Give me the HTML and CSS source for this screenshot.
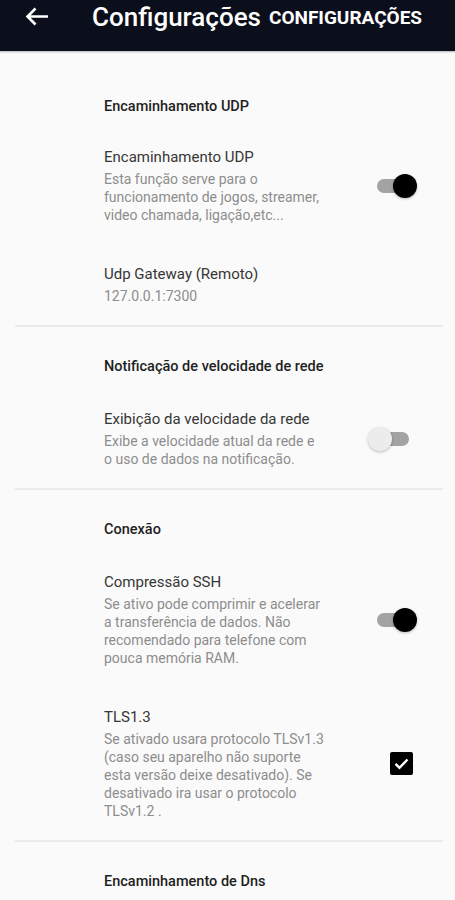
FILE: index.html
```html
<!DOCTYPE html>
<html>

<head>
  <meta charset="UTF-8">
  <title>Configurações</title>
  <link rel="stylesheet" href="styles.css">
</head>

<body>
  <header class="toolbar">
    <svg class="back" width="24" height="20" viewBox="0 0 24 20">
      <path d="M23 9.5H3 M10.5 1.5L2.5 9.5L10.5 17.5" fill="none" stroke="#fff" stroke-width="2.6" />
    </svg>
    <span class="title">Configurações</span>
    <span class="action">CONFIGURAÇÕES</span>
  </header>

  <main class="prefs">
    <section class="group first">
      <h2 class="category">Encaminhamento UDP</h2>
      <div class="item">
        <div class="text">
          <div class="item-title">Encaminhamento UDP</div>
          <div class="summary">Esta função serve para o<br>funcionamento de jogos, streamer,<br>video chamada, ligação,etc...</div>
        </div>
        <div class="widget"><span class="switch on"><span class="track"></span><span class="thumb"></span></span></div>
      </div>
      <div class="item">
        <div class="text">
          <div class="item-title">Udp Gateway (Remoto)</div>
          <div class="summary">127.0.0.1:7300</div>
        </div>
      </div>
    </section>

    <hr class="divider">

    <section class="group">
      <h2 class="category">Notificação de velocidade de rede</h2>
      <div class="item">
        <div class="text">
          <div class="item-title">Exibição da velocidade da rede</div>
          <div class="summary">Exibe a velocidade atual da rede e<br>o uso de dados na notificação.</div>
        </div>
        <div class="widget"><span class="switch"><span class="track"></span><span class="thumb"></span></span></div>
      </div>
    </section>

    <hr class="divider">

    <section class="group">
      <h2 class="category">Conexão</h2>
      <div class="item">
        <div class="text">
          <div class="item-title">Compressão SSH</div>
          <div class="summary">Se ativo pode comprimir e acelerar<br>a transferência de dados. Não<br>recomendado para telefone com<br>pouca memória RAM.</div>
        </div>
        <div class="widget"><span class="switch on"><span class="track"></span><span class="thumb"></span></span></div>
      </div>
      <div class="item">
        <div class="text">
          <div class="item-title">TLS1.3</div>
          <div class="summary">Se ativado usara protocolo TLSv1.3<br>(caso seu aparelho não suporte<br>esta versão deixe desativado). Se<br>desativado ira usar o protocolo<br>TLSv1.2 .</div>
        </div>
        <div class="widget">
          <span class="checkbox">
            <svg width="23" height="23" viewBox="0 0 23 23">
              <path d="M5.5 11.8l4 4 8-8.3" fill="none" stroke="#fff" stroke-width="2.4" />
            </svg>
          </span>
        </div>
      </div>
    </section>

    <hr class="divider">

    <section class="group">
      <h2 class="category">Encaminhamento de Dns</h2>
    </section>
  </main>
</body>

</html>
```

FILE: styles.css
```css
body {
  margin: 0;
  background-color: #fafafa;
  font-family: Roboto, "Noto Sans", sans-serif;
}

.toolbar {
  height: 48px;
  padding: 3px 0 0 25px;
  display: flex;
  align-items: flex-start;
  background-color: #0b0e1b;
  color: #fff;
  box-shadow: 0 1px 0 #c9c9cc, 0 2px 1px #e4e4e6;
  line-height: 29px;
}

.back {
  margin-top: 4px;
}

.title {
  margin-left: 43px;
  font-size: 26px;
  font-weight: 500;
}

.action {
  margin-left: 8px;
  font-size: 19px;
  font-weight: 700;
}

.group {
  padding-top: 30px;
}

.group.first {
  padding-top: 46px;
}

.category {
  margin: 0 0 12px 104px;
  font-size: 14.5px;
  font-weight: 500;
  line-height: 20px;
  color: #1f1f1f;
}

.group.first .category {
  margin-bottom: 10px;
}

.item {
  display: flex;
  align-items: center;
  padding: 20px 0 20px 104px;
}

.text {
  width: 250px;
  white-space: nowrap;
}

.item-title {
  font-size: 15px;
  line-height: 20px;
  color: #363636;
}

.summary {
  margin-top: 3px;
  font-size: 14px;
  line-height: 18px;
  color: #8d8d8d;
}

.widget {
  flex: 1;
  display: flex;
  justify-content: flex-end;
  padding-right: 38px;
}

.switch {
  position: relative;
  width: 49px;
  height: 26px;
}

.track {
  position: absolute;
  left: 9px;
  top: 6px;
  width: 32px;
  height: 14px;
  border-radius: 7px;
  background-color: #a3a3a3;
}

.thumb {
  position: absolute;
  left: 0;
  top: 1px;
  width: 24px;
  height: 24px;
  border-radius: 50%;
  background-color: #ececec;
  box-shadow: 0 1px 3px rgba(0, 0, 0, 0.25);
}

.switch.on .thumb {
  left: 25px;
  background-color: #000;
}

.checkbox {
  display: flex;
  width: 23px;
  height: 23px;
  margin-right: 4px;
  border-radius: 2px;
  background-color: #000;
}

.divider {
  margin: 0 12px 0 15px;
  border: none;
  border-top: 2px solid #ebebeb;
}
```
